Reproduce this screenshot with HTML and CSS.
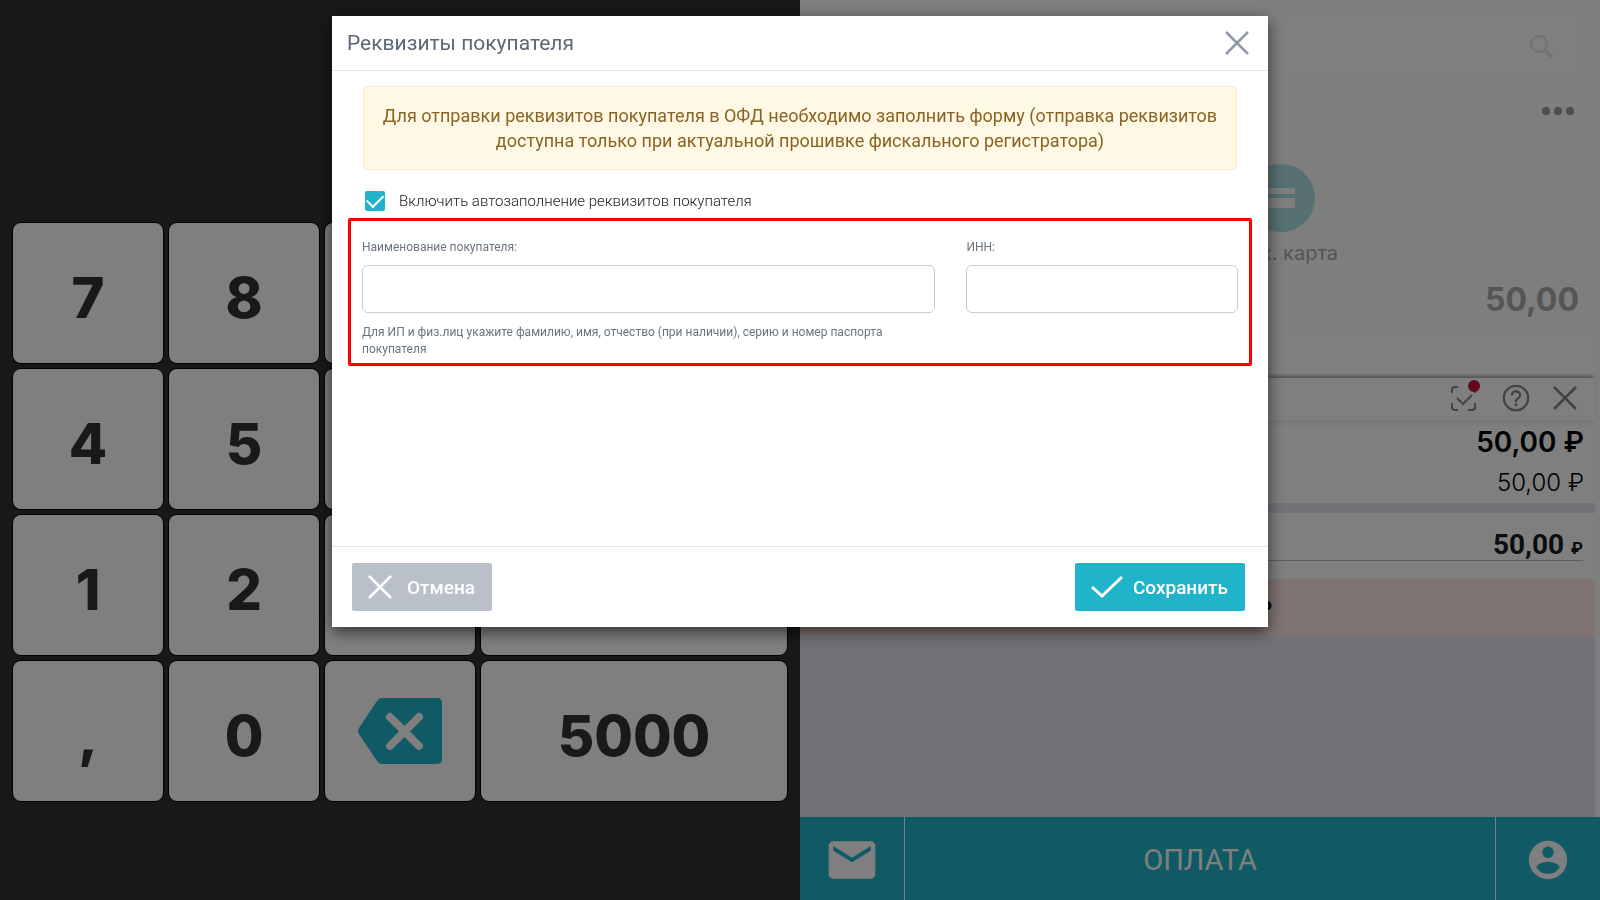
FILE: index.html
```html
<!DOCTYPE html>
<html lang="ru">
<head>
    <meta charset="UTF-8">
    <meta name="viewport" content="width=device-width, initial-scale=1.0">
    <title>Реквизиты покупателя</title>
    <link rel="stylesheet" href="styles.css">
</head>
<body>
    <div class="pos">
        <!-- Keypad -->
        <section class="keypad">
            <div class="keys">
                <button class="key">7</button>
                <button class="key">8</button>
                <button class="key">9</button>
                <button class="key wide">500</button>
                <button class="key">4</button>
                <button class="key">5</button>
                <button class="key">6</button>
                <button class="key wide">1000</button>
                <button class="key">1</button>
                <button class="key">2</button>
                <button class="key">3</button>
                <button class="key wide">2000</button>
                <button class="key">,</button>
                <button class="key">0</button>
                <button class="key" aria-label="Стереть">
                    <svg class="backspace" viewBox="0 0 84 66">
                        <path fill="#1fb4c9" d="M24 0H79Q84 0 84 5V61Q84 66 79 66H24Q21 66 19 63L1 36Q-1 33 1 30L19 3Q21 0 24 0Z"/>
                        <path stroke="#fff" stroke-width="8" stroke-linecap="round" d="M32 19L61 48M61 19L32 48"/>
                    </svg>
                </button>
                <button class="key wide">5000</button>
            </div>
        </section>

        <!-- Receipt -->
        <section class="receipt">
            <div class="payment">
                <div class="search">
                    <svg width="28" height="28" viewBox="0 0 28 28" fill="none" stroke="#e2e7e5">
                        <circle cx="12" cy="12" r="8" stroke-width="2.500"/>
                        <path stroke-width="3.500" d="M18 18l7 7"/>
                    </svg>
                </div>
                <button class="more" aria-label="Ещё"><i></i><i></i><i></i></button>
                <div class="method">
                    <svg width="68" height="68" viewBox="0 0 68 68">
                        <circle cx="34" cy="34" r="34" fill="#aee0e6"/>
                        <rect x="20" y="24" width="28" height="20" rx="2" fill="#fff"/>
                        <path d="M20 30h28v4H20z" fill="#aee0e6"/>
                    </svg>
                    <span>Банк. карта</span>
                </div>
                <div class="method-sum">50,00</div>
            </div>
            <div class="strip"></div>

            <div class="tools">
                <button aria-label="Проверка">
                    <svg width="32" height="32" viewBox="0 0 32 32" fill="none" stroke="#7f8891" stroke-width="2">
                        <path d="M5 11V8q0-3 3-3h3M5 21v4q0 3 3 3h3M21 28h4q3 0 3-3v-4M28 11V8M10 16l6 6 9-9"/>
                        <circle cx="27" cy="4" r="6" fill="#c8103c" stroke="none"/>
                    </svg>
                </button>
                <button aria-label="Справка">
                    <svg width="32" height="32" viewBox="0 0 24 24" fill="#7f8891"><path d="M11 18h2v-2h-2zm1-16a10 10 0 1 0 0 20 10 10 0 0 0 0-20zm0 18.300a8.300 8.300 0 1 1 0-16.600 8.300 8.300 0 0 1 0 16.600zM12 6a4 4 0 0 0-4 4h1.800a2.200 2.200 0 0 1 4.400 0c0 2-3.100 1.800-3.100 5h1.800c0-2.300 3.100-2.500 3.100-5a4 4 0 0 0-4-4z"/></svg>
                </button>
                <button aria-label="Закрыть чек">
                    <svg width="24" height="24" viewBox="0 0 24 24"><path stroke="#7f8891" stroke-width="2.500" d="M1 1l22 22M23 1L1 23"/></svg>
                </button>
            </div>

            <div class="totals">
                <div class="total">50,00 ₽</div>
                <div class="subtotal">50,00 ₽</div>
            </div>
            <div class="paid"><div class="paid-line">50,00 <small>₽</small></div></div>
            <div class="change">₽</div>
            <div class="blank"></div>

            <div class="actions">
                <button aria-label="Отправить чек">
                    <svg width="56" height="56" viewBox="0 0 24 24" fill="#fff"><path d="M20 4H4a2 2 0 0 0-2 2v12c0 1.100.9 2 2 2h16a2 2 0 0 0 2-2V6a2 2 0 0 0-2-2zm0 4l-8 5-8-5V6l8 5 8-5z"/></svg>
                </button>
                <button class="pay">ОПЛАТА</button>
                <button aria-label="Покупатель">
                    <svg width="46" height="46" viewBox="0 0 24 24" fill="#fff"><path d="M12 2a10 10 0 1 0 0 20 10 10 0 0 0 0-20zm0 3a3 3 0 1 1 0 6 3 3 0 0 1 0-6zm0 14.200a7.200 7.200 0 0 1-6-3.220c.03-1.990 4-3.080 6-3.080s5.970 1.090 6 3.080a7.200 7.200 0 0 1-6 3.220z"/></svg>
                </button>
            </div>
        </section>
    </div>

    <!-- Buyer details dialog -->
    <div class="overlay">
        <form class="modal" role="dialog" aria-labelledby="title">
            <header class="modal-header">
                <h1 id="title">Реквизиты покупателя</h1>
                <button type="button" class="close" aria-label="Закрыть">
                    <svg width="24" height="24" viewBox="0 0 24 24"><path stroke="#8f9ba8" stroke-width="2.500" d="M1 1l22 22M23 1L1 23"/></svg>
                </button>
            </header>

            <div class="modal-body">
                <p class="notice">Для отправки реквизитов покупателя в ОФД необходимо заполнить форму (отправка реквизитов доступна только при актуальной прошивке фискального регистратора)</p>
                <label class="autofill">
                    <input type="checkbox" checked>
                    Включить автозаполнение реквизитов покупателя
                </label>
                <div class="fields">
                    <div class="field">
                        <label for="name">Наименование покупателя:</label>
                        <input type="text" id="name">
                        <p class="hint">Для ИП и физ.лиц укажите фамилию, имя, отчество (при наличии), серию и номер паспорта покупателя</p>
                    </div>
                    <div class="field">
                        <label for="inn">ИНН:</label>
                        <input type="text" id="inn">
                    </div>
                </div>
            </div>

            <footer class="modal-footer">
                <button type="button" class="btn cancel">
                    <svg width="24" height="24" viewBox="0 0 24 24"><path stroke="#fff" stroke-width="2.500" d="M1 1l22 22M23 1L1 23"/></svg>
                    Отмена
                </button>
                <button type="submit" class="btn save">
                    <svg width="32" height="24" viewBox="0 0 32 24"><path fill="none" stroke="#fff" stroke-width="3" d="M1 12l10 9L31 2"/></svg>
                    Сохранить
                </button>
            </footer>
        </form>
    </div>
</body>
</html>
```
FILE: styles.css
```css
* {
    box-sizing: border-box;
}

body {
    margin: 0;
    font-family: Roboto, "Liberation Sans", sans-serif;
    background: #2e3134;
}

button {
    padding: 0;
    border: 0;
    background: none;
    font-family: inherit;
    cursor: pointer;
}

svg {
    display: block;
    overflow: visible;
}

.pos {
    display: grid;
    grid-template-columns: 1fr 1fr;
    height: 100vh;
}

/* Keypad */
.keypad {
    display: flex;
    flex-direction: column;
    justify-content: flex-end;
    padding: 0 13px 99px;
    background: #2e3134;
}

.keys {
    display: grid;
    grid-template-columns: repeat(5, 1fr);
    grid-auto-rows: 140px;
    gap: 6px;
}

.key {
    display: flex;
    align-items: center;
    justify-content: center;
    padding-top: 10px;
    border-radius: 8px;
    background: #fff;
    box-shadow: 0 0 0 1px #000;
    color: #333;
    font-family: Inter, sans-serif;
    font-size: 56px;
    font-weight: 800;
}

.key.wide {
    grid-column: span 2;
}

.backspace {
    width: 84px;
    margin-bottom: 10px;
}

/* Receipt */
.receipt {
    display: flex;
    flex-direction: column;
    background: #f9fefc;
    font-family: Inter, sans-serif;
}

.payment {
    display: flex;
    flex-direction: column;
    height: 330px;
    padding: 17px 21px 0 16px;
}

.search {
    display: flex;
    align-items: center;
    justify-content: flex-end;
    height: 57px;
    padding-right: 24px;
    border-radius: 8px;
    background: #fff;
}

.more {
    display: flex;
    align-self: flex-end;
    gap: 4px;
    padding: 33px 5px 0;
}

.more i {
    width: 8px;
    height: 8px;
    border-radius: 50%;
    background: #9a9a9a;
}

.method {
    display: flex;
    flex-direction: column;
    align-items: center;
    gap: 8px;
    padding: 49px 0 0 22%;
    color: #aaa;
    font-size: 20px;
    line-height: 26px;
}

.method-sum {
    padding-top: 14px;
    color: #aaa;
    font-size: 32px;
    line-height: 40px;
    font-weight: 700;
    text-align: right;
}

.strip {
    height: 48px;
    margin-right: 5px;
    background: #fff;
}

.tools {
    display: flex;
    align-items: center;
    justify-content: flex-end;
    gap: 21px;
    height: 42px;
    margin-right: 5px;
    padding: 0 18px 3px 0;
    background: #fff;
    box-shadow: 0 -4px 4px -2px rgba(0, 0, 0, 0.4);
}

.totals {
    height: 83px;
    margin-right: 5px;
    padding: 2px 11px 0;
    background: linear-gradient(#f0f0f0, #fff 8px);
    text-align: right;
}

.total {
    font-size: 28px;
    line-height: 40px;
    font-weight: 600;
}

.subtotal {
    font-size: 24px;
    line-height: 42px;
    font-weight: 300;
}

.paid {
    height: 76px;
    margin-right: 5px;
    padding: 10px 12px 0;
    border-top: 10px solid #e3e5ed;
    background: #fff;
}

.paid-line {
    height: 38px;
    border-bottom: 1px solid #b5bbc8;
    color: #181b1e;
    font-family: Roboto, sans-serif;
    font-size: 28px;
    line-height: 44px;
    font-weight: 700;
    text-align: right;
}

.paid-line small {
    font-size: 17px;
}

.change {
    height: 58px;
    margin-right: 5px;
    padding-right: 323px;
    background: #ffe8e5;
    font-size: 20px;
    line-height: 60px;
    font-weight: 700;
    text-align: right;
}

.blank {
    flex: 1;
    margin-right: 5px;
    background: #e3e5ed;
}

.actions {
    display: grid;
    grid-template-columns: 104px 1fr 104px;
    height: 83px;
    background: #1fb4c9;
}

.actions button {
    display: flex;
    align-items: center;
    justify-content: center;
    padding-top: 3px;
}

.actions .pay {
    border: solid #fff;
    border-width: 0 1px;
    color: #fff;
    font-family: Roboto, sans-serif;
    font-size: 29px;
}

/* Dialog */
.overlay {
    position: fixed;
    inset: 0;
    padding-top: 16px;
    background: rgba(0, 0, 0, 0.5);
}

.modal {
    display: flex;
    flex-direction: column;
    width: 58.5%;
    min-height: 67.9vh;
    margin: 0 auto;
    background: #fff;
    box-shadow: 0 5px 15px rgba(0, 0, 0, 0.6);
}

.modal-header {
    display: flex;
    align-items: center;
    justify-content: space-between;
    height: 55px;
    padding: 0 19px 0 15px;
    border-bottom: 1px solid #e5e5e5;
}

.modal-header h1 {
    margin: 0;
    color: #5b6876;
    font-size: 21px;
    font-weight: 400;
}

.modal-body {
    flex: 1;
    padding: 15px 16px;
}

.notice {
    margin: 0 15px;
    padding: 16px 14px;
    border: 1px solid #faebcc;
    border-radius: 4px;
    background: #fef8e4;
    color: #8a6424;
    font-size: 18px;
    line-height: 25px;
    text-align: center;
}

.autofill {
    display: flex;
    align-items: center;
    gap: 14px;
    margin: 19px 17px 5px;
    color: #222;
    font-size: 15px;
    line-height: 24px;
    font-weight: 300;
}

.autofill input {
    appearance: none;
    display: grid;
    place-items: center;
    width: 20px;
    height: 20px;
    margin: 0;
    border-radius: 2px;
    background: #1fb4c9;
}

.autofill input:checked::before {
    content: "";
    width: 14px;
    height: 8px;
    margin-bottom: 4px;
    border: solid #fff;
    border-width: 0 0 2px 2px;
    transform: rotate(-45deg);
}

.fields {
    display: grid;
    grid-template-columns: 19fr 9fr;
    gap: 31px;
    padding: 16px 11px 5px;
    border: 3px solid #f00;
    border-radius: 2px;
}

.field label {
    display: block;
    margin-bottom: 8px;
    color: #6b7580;
    font-size: 12px;
    line-height: 20px;
}

.field input {
    display: block;
    width: 100%;
    height: 48px;
    padding: 0 12px;
    border: 1px solid #ccc;
    border-radius: 6px;
    font-size: 18px;
}

.hint {
    margin: 11px 0 0;
    color: #6b7580;
    font-size: 12px;
    line-height: 17px;
}

.modal-footer {
    display: flex;
    justify-content: space-between;
    padding: 16px 23px 16px 20px;
    border-top: 1px solid #e5e5e5;
}

.btn {
    display: flex;
    align-items: center;
    height: 48px;
    border-radius: 2px;
    color: #fff;
    font-size: 19px;
    font-weight: 500;
}

.cancel {
    gap: 15px;
    padding: 0 17px 0 16px;
    background: #bac0c9;
}

.save {
    gap: 10px;
    padding: 0 17px 0 16px;
    background: #1fb4c9;
}
```
